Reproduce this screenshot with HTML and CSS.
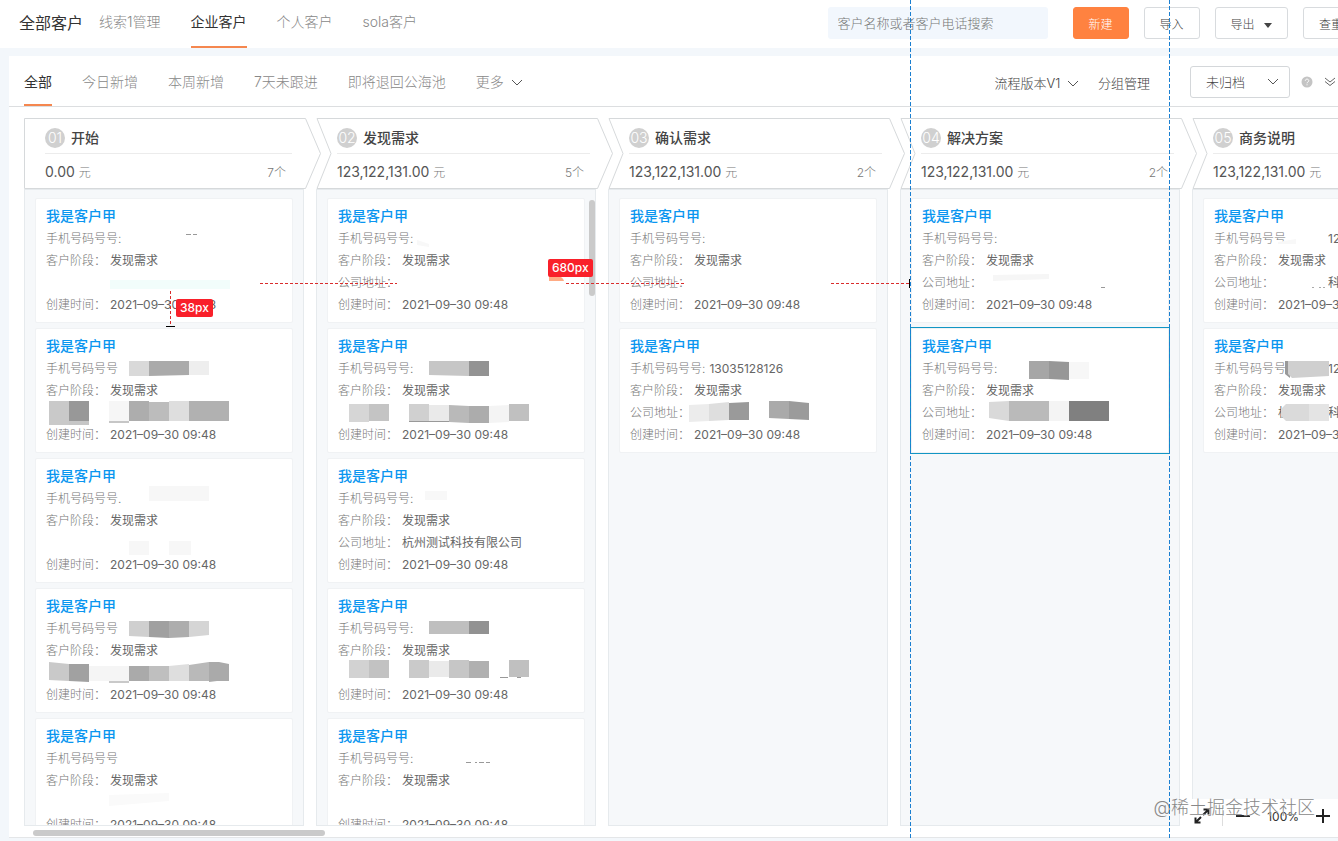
FILE: index.html
```html
<!DOCTYPE html>
<html lang="zh-CN">
<head>
    <meta charset="UTF-8">
    <meta name="viewport" content="width=device-width, initial-scale=1.0">
    <title>全部客户</title>
    <link rel="stylesheet" href="styles.css">
</head>
<body>
    <header class="topbar">
        <h1>全部客户</h1>
        <nav class="tabs">
            <a href="#">线索1管理</a>
            <a href="#" class="active">企业客户</a>
            <a href="#">个人客户</a>
            <a href="#">sola客户</a>
        </nav>
        <div class="actions">
            <input type="text" class="search" placeholder="客户名称或者客户电话搜索" aria-label="搜索">
            <button class="btn primary">新建</button>
            <button class="btn">导入</button>
            <button class="btn">导出 <svg class="caret" viewBox="0 0 8 5"><path d="M0 0h8L4 5z"/></svg></button>
            <button class="btn">查重</button>
        </div>
    </header>

    <main class="panel">
        <div class="toolbar">
            <nav class="tabs">
                <a href="#" class="active">全部</a>
                <a href="#">今日新增</a>
                <a href="#">本周新增</a>
                <a href="#">7天未跟进</a>
                <a href="#">即将退回公海池</a>
                <a href="#">更多 <svg class="chevron" viewBox="0 0 12 8"><path d="M1 1l5 5 5-5"/></svg></a>
            </nav>
            <div class="filters">
                <button class="link">流程版本V1 <svg class="chevron" viewBox="0 0 12 8"><path d="M1 1l5 5 5-5"/></svg></button>
                <button class="link">分组管理</button>
                <div class="select">
                    <select aria-label="归档状态"><option>未归档</option></select>
                    <svg class="chevron" viewBox="0 0 12 8"><path d="M1 1l5 5 5-5"/></svg>
                </div>
                <svg class="help" viewBox="0 0 12 12"><circle cx="6" cy="6" r="5.5"/><path d="M4.3 4.8c0-2.3 3.5-2.2 3.5 0C7.8 6 6 6 6 7.300M6 8.300v1"/></svg>
                <svg class="double" viewBox="0 0 12 10"><path d="M1 1l5 4 5-4M1 4.500l5 4 5-4"/></svg>
            </div>
        </div>

        <div class="board">
            <section class="column">
                <div class="stage">
                    <svg class="arrow" viewBox="0 0 298 72"><path d="M.5.5H281.500l15 35-15 35H.5z"/></svg>
                    <h2><span class="num">01</span>开始</h2>
                    <div class="sum"><span>0.00 <small>元</small></span><span class="count">7个</span></div>
                </div>
                <div class="list">
                    <article class="card">
                        <h3>我是客户甲</h3>
                        <p><label>手机号码号号:</label></p>
                        <p><label>客户阶段：</label>发现需求</p>
                        <p></p>
                        <p><label>创建时间：</label>2021–09–30 09:48</p>
                        <svg class="mosaic" viewBox="0 0 258 125"><path fill="#f2fdfb" d="M75 82h120v9H75z"/><path fill="#999" d="M151 36h5v1h-5zM158 36h4v1h-4z"/></svg>
                    </article>
                    <article class="card">
                        <h3>我是客户甲</h3>
                        <p><label>手机号码号号</label></p>
                        <p><label>客户阶段：</label>发现需求</p>
                        <p></p>
                        <p><label>创建时间：</label>2021–09–30 09:48</p>
                        <svg class="mosaic" viewBox="0 0 258 125">
                            <path fill="#d9d9d9" d="M94 33h20v15H94z"/><path fill="#aaa" d="M114 33h40v14l-40 1z"/><path fill="#eee" d="M154 33h20v14h-20z"/>
                            <path fill="#c9c9c9" d="M14 73h20v24H14z"/><path fill="#989898" d="M34 73h20v22H34z"/><path fill="#c6c6c6" d="M34 93h20v4H34z"/><path fill="#f6f6f6" d="M74 73h20v20H74z"/><path fill="#c6c6c6" d="M74 93h20v2H74z"/>
                            <path fill="#adadad" d="M94 73h20v20H94z"/><path fill="#bcbcbc" d="M114 74h20v19h-20z"/><path fill="#dedede" d="M134 73h20v20h-20z"/><path fill="#b1b1b1" d="M154 73h40v20h-40z"/>
                        </svg>
                    </article>
                    <article class="card">
                        <h3>我是客户甲</h3>
                        <p><label>手机号码号号.</label></p>
                        <p><label>客户阶段：</label>发现需求</p>
                        <p></p>
                        <p><label>创建时间：</label>2021–09–30 09:48</p>
                        <svg class="mosaic" viewBox="0 0 258 125"><path fill="#f7f7f7" d="M114 28h60v15h-60zM94 83h20v14H94zM134 83h22v14h-22z"/></svg>
                    </article>
                    <article class="card">
                        <h3>我是客户甲</h3>
                        <p><label>手机号码号号</label></p>
                        <p><label>客户阶段：</label>发现需求</p>
                        <p></p>
                        <p><label>创建时间：</label>2021–09–30 09:48</p>
                        <svg class="mosaic" viewBox="0 0 258 125">
                            <path fill="#cfcfcf" d="M94 33h20v16l-20-1z"/><path fill="#a0a0a0" d="M114 33h20v17l-20-1z"/><path fill="#adadad" d="M134 33h20v16l-20 1z"/><path fill="#d5d5d5" d="M154 33h20v14l-20 2z"/>
                            <path fill="#c9c9c9" d="M14 74l20 2v17l-20-1z"/><path fill="#a1a1a1" d="M34 76h20v18l-20-1z"/><path fill="#f5f5f5" d="M54 78h40v15H54z"/><path fill="#c9c9c9" d="M74 93h20v2H74z"/>
                            <path fill="#aaa" d="M94 78h20v15H94z"/><path fill="#bfbfbf" d="M114 78h20v15h-20z"/><path fill="#dedede" d="M134 78l20-2v17h-20z"/><path fill="#b9b9b9" d="M154 77l20-3v19h-20z"/><path fill="#aaa" d="M174 74h10l10 2v17h-12l-8 1z"/>
                        </svg>
                    </article>
                    <article class="card">
                        <h3>我是客户甲</h3>
                        <p><label>手机号码号号</label></p>
                        <p><label>客户阶段：</label>发现需求</p>
                        <p></p>
                        <p><label>创建时间：</label>2021–09–30 09:48</p>
                        <svg class="mosaic" viewBox="0 0 258 125"><path fill="#fafafa" d="M74 77l60-2v8l-60 5z"/></svg>
                    </article>
                </div>
            </section>

            <section class="column">
                <div class="stage">
                    <svg class="arrow" viewBox="0 0 298 72"><path d="M1 .5H281.500l15 35-15 35H1l14-35z"/></svg>
                    <h2><span class="num">02</span>发现需求</h2>
                    <div class="sum"><span>123,122,131.00 <small>元</small></span><span class="count">5个</span></div>
                </div>
                <div class="list">
                    <span class="thumb-y"></span>
                    <article class="card">
                        <h3>我是客户甲</h3>
                        <p><label>手机号码号号:</label></p>
                        <p><label>客户阶段：</label>发现需求</p>
                        <p><label>公司地址：</label></p>
                        <p><label>创建时间：</label>2021–09–30 09:48</p>
                        <svg class="mosaic" viewBox="0 0 258 125"><path fill="#f8f8f8" d="M90 42l12 4v3l-12-2z"/></svg>
                    </article>
                    <article class="card">
                        <h3>我是客户甲</h3>
                        <p><label>手机号码号号:</label></p>
                        <p><label>客户阶段：</label>发现需求</p>
                        <p></p>
                        <p><label>创建时间：</label>2021–09–30 09:48</p>
                        <svg class="mosaic" viewBox="0 0 258 125">
                            <path fill="#c6c6c6" d="M102 33h40v15l-40-1z"/><path fill="#939393" d="M142 33h20v15h-20z"/>
                            <path fill="#d6d6d6" d="M22 76h20v18H22z"/><path fill="#c4c4c4" d="M42 76h20v17H42z"/>
                            <path fill="#d0d0d0" d="M82 76h20v18H82z"/><path fill="#eaeaea" d="M102 77h20v17h-20z"/><path fill="#b9b9b9" d="M122 77l20 1v17l-20-1z"/><path fill="#acacac" d="M142 78h20v17h-20z"/><path fill="#f4f4f4" d="M162 78l20-1v17l-20 1z"/><path fill="#c0c0c0" d="M182 76h20v17h-20z"/><path fill="#999" d="M82 93h40v1H82z"/>
                        </svg>
                    </article>
                    <article class="card">
                        <h3>我是客户甲</h3>
                        <p><label>手机号码号号:</label></p>
                        <p><label>客户阶段：</label>发现需求</p>
                        <p><label>公司地址：</label>杭州测试科技有限公司</p>
                        <p><label>创建时间：</label>2021–09–30 09:48</p>
                        <svg class="mosaic" viewBox="0 0 258 125"><path fill="#f8f8f8" d="M98 33h22v9H98z"/></svg>
                    </article>
                    <article class="card">
                        <h3>我是客户甲</h3>
                        <p><label>手机号码号号:</label></p>
                        <p><label>客户阶段：</label>发现需求</p>
                        <p></p>
                        <p><label>创建时间：</label>2021–09–30 09:48</p>
                        <svg class="mosaic" viewBox="0 0 258 125">
                            <path fill="#bfbfbf" d="M102 33h40v13h-40z"/><path fill="#929292" d="M142 33h20v13h-20z"/>
                            <path fill="#d2d2d2" d="M22 72h20v18H22z"/><path fill="#c2c2c2" d="M42 72h20v18H42z"/>
                            <path fill="#cacaca" d="M82 72h20v18H82z"/><path fill="#eaeaea" d="M102 73h20v16h-20z"/><path fill="#c6c6c6" d="M122 72h20v18h-20z"/><path fill="#b0b0b0" d="M142 73h20v17h-20z"/><path fill="#c0c0c0" d="M182 72h20v17h-20z"/><path fill="#999" d="M173 89h8v1h-8zM190 89h4v1h-4z"/>
                        </svg>
                    </article>
                    <article class="card">
                        <h3>我是客户甲</h3>
                        <p><label>手机号码号号:</label></p>
                        <p><label>客户阶段：</label>发现需求</p>
                        <p></p>
                        <p><label>创建时间：</label>2021–09–30 09:48</p>
                        <svg class="mosaic" viewBox="0 0 258 125"><path fill="#999" d="M139 44h5v1h-5zM148 44h2v1h-2zM152 44h5v1h-5zM159 44h4v1h-4z"/></svg>
                    </article>
                </div>
            </section>

            <section class="column">
                <div class="stage">
                    <svg class="arrow" viewBox="0 0 298 72"><path d="M1 .5H281.500l15 35-15 35H1l14-35z"/></svg>
                    <h2><span class="num">03</span>确认需求</h2>
                    <div class="sum"><span>123,122,131.00 <small>元</small></span><span class="count">2个</span></div>
                </div>
                <div class="list">
                    <article class="card">
                        <h3>我是客户甲</h3>
                        <p><label>手机号码号号:</label></p>
                        <p><label>客户阶段：</label>发现需求</p>
                        <p><label>公司地址：</label></p>
                        <p><label>创建时间：</label>2021–09–30 09:48</p>
                    </article>
                    <article class="card">
                        <h3>我是客户甲</h3>
                        <p><label>手机号码号号:</label>13035128126</p>
                        <p><label>客户阶段：</label>发现需求</p>
                        <p><label>公司地址：</label></p>
                        <p><label>创建时间：</label>2021–09–30 09:48</p>
                        <svg class="mosaic" viewBox="0 0 258 125">
                            <path fill="#ececec" d="M70 77l20-1v17l-20 1z"/><path fill="#dedede" d="M90 76l20-2v18l-20 1z"/><path fill="#9a9a9a" d="M110 75l20-1v18h-20z"/><path fill="#aaa" d="M150 73h20v18l-20-1z"/><path fill="#9b9b9b" d="M170 73l20 2v17l-20-1z"/>
                        </svg>
                    </article>
                </div>
            </section>

            <section class="column">
                <div class="stage">
                    <svg class="arrow" viewBox="0 0 298 72"><path d="M1 .5H281.500l15 35-15 35H1l14-35z"/></svg>
                    <h2><span class="num">04</span>解决方案</h2>
                    <div class="sum"><span>123,122,131.00 <small>元</small></span><span class="count">2个</span></div>
                </div>
                <div class="list">
                    <article class="card">
                        <h3>我是客户甲</h3>
                        <p><label>手机号码号号:</label></p>
                        <p><label>客户阶段：</label>发现需求</p>
                        <p><label>公司地址：</label></p>
                        <p><label>创建时间：</label>2021–09–30 09:48</p>
                        <svg class="mosaic" viewBox="0 0 258 125"><path fill="#f6f6f6" d="M82 77l56-1v5l-56 2z"/><path fill="#999" d="M190 89h4v1h-4z"/></svg>
                    </article>
                    <article class="card selected">
                        <h3>我是客户甲</h3>
                        <p><label>手机号码号号:</label></p>
                        <p><label>客户阶段：</label>发现需求</p>
                        <p><label>公司地址：</label></p>
                        <p><label>创建时间：</label>2021–09–30 09:48</p>
                        <svg class="mosaic" viewBox="0 0 258 125">
                            <path fill="#a6a6a6" d="M118 33h20v18h-20z"/><path fill="#979797" d="M138 33l20 1v18l-20-1z"/><path fill="#f7f7f7" d="M158 34h20v17h-20z"/>
                            <path fill="#d9d9d9" d="M78 74l20-1v20l-20-3z"/><path fill="#bababa" d="M98 73h40v20H98z"/><path fill="#f4f4f4" d="M138 73h20v20h-20z"/><path fill="#808080" d="M158 73h40v20h-40z"/>
                        </svg>
                    </article>
                </div>
            </section>

            <section class="column">
                <div class="stage">
                    <svg class="arrow" viewBox="0 0 298 72"><path d="M1 .5H281.500l15 35-15 35H1l14-35z"/></svg>
                    <h2><span class="num">05</span>商务说明</h2>
                    <div class="sum"><span>123,122,131.00 <small>元</small></span></div>
                </div>
                <div class="list">
                    <article class="card">
                        <h3>我是客户甲</h3>
                        <p><label>手机号码号号</label><span class="gap"></span>12</p>
                        <p><label>客户阶段：</label>发现需求</p>
                        <p><label>公司地址：</label><span class="gap wide"></span>科</p>
                        <p><label>创建时间：</label>2021–09–30 09:48</p>
                        <svg class="mosaic" viewBox="0 0 258 125"><path fill="#f8f8f8" d="M75 44l18-3v5H75z"/><path fill="#aaa" d="M109 89h2v1h-2zM116 89h2v1h-2zM120 89h2v1h-2z"/></svg>
                    </article>
                    <article class="card">
                        <h3>我是客户甲</h3>
                        <p><label>手机号码号号</label><span class="gap"></span>12</p>
                        <p><label>客户阶段：</label>发现需求</p>
                        <p><label>公司地址：</label>杭<span class="gap"></span>科</p>
                        <p><label>创建时间：</label>2021–09–30 09:48</p>
                        <svg class="mosaic" viewBox="0 0 258 125">
                            <path fill="#999" d="M82 33h5v17l-5-4z"/><path fill="#cfcfcf" d="M85 33h41v15l-37 2-4-4z"/><path fill="#dadada" d="M78 81l5-5h23v17H83l-5-5z"/><path fill="#e4e4e4" d="M106 76h20v17h-20z"/>
                        </svg>
                    </article>
                </div>
            </section>
        </div>
        <div class="track-x"><span class="thumb-x"></span></div>
    </main>

    <div class="zoom">
        <button aria-label="全屏"><svg width="16" height="16" viewBox="0 0 16 16"><path d="M9 7l5-5M9.500 1.500h5v5M7 9l-5 5M1.500 9.500v5h5"/></svg></button>
        <i class="line"></i>
        <button aria-label="缩小"><svg width="14" height="14" viewBox="0 0 14 14"><path d="M0 7h14"/></svg></button>
        <span>100%</span>
        <button aria-label="放大"><svg width="14" height="14" viewBox="0 0 14 14"><path d="M0 7h14M7 0v14"/></svg></button>
    </div>
    <div class="watermark">@稀土掘金技术社区</div>

    <!-- measuring guides -->
    <svg class="guides" width="1338" height="841">
        <path class="blue" d="M910.500 0v838M1169.500 0v838"/>
        <path class="red" d="M260 283.500h137M566 283.500h119M831 283.500h78M170.500 291v35"/>
        <path class="tick" d="M909.500 279v9M166 326.500h9"/>
        <path fill="#ffab84" d="M549 276h9q5 1 6 5h-15z"/>
    </svg>
    <span class="size size-v">38px</span>
    <span class="size size-h">680px</span>
</body>
</html>
```
FILE: styles.css
```css
* {
    box-sizing: border-box;
}

body {
    margin: 0;
    height: 100vh;
    display: flex;
    flex-direction: column;
    position: relative;
    overflow: hidden;
    background: #f3f7fb;
    color: #555;
    font-family: Inter, "Noto Sans CJK SC", sans-serif;
    font-size: 12px;
    font-weight: 300;
}

h1, h2, h3, p {
    margin: 0;
}

a {
    color: inherit;
    text-decoration: none;
}

button, input, select {
    font: inherit;
    color: inherit;
}

button {
    border: none;
    background: none;
    padding: 0;
    white-space: nowrap;
    cursor: pointer;
}

svg {
    fill: none;
}

/* top bar */
.topbar {
    flex: none;
    height: 48px;
    padding-left: 19px;
    display: flex;
    background: #fff;
    box-shadow: 0 1px 4px #f3f7fb;
}

.topbar h1 {
    margin-right: 16px;
    font-size: 16px;
    font-weight: 400;
    line-height: 46px;
    color: #333;
    white-space: nowrap;
}

.tabs {
    display: flex;
    gap: 30px;
    font-size: 14px;
    color: #888;
    white-space: nowrap;
}

.tabs a {
    line-height: 44px;
    border-bottom: 2px solid transparent;
}

.tabs .active {
    color: #333;
    font-weight: 400;
    border-color: #f5874f;
}

.actions {
    margin-left: auto;
    margin-right: -21px;
    padding-top: 7px;
    display: flex;
    gap: 15px;
}

.search {
    width: 220px;
    height: 32px;
    margin-right: 10px;
    padding: 0 10px;
    border: none;
    border-radius: 3px;
    background: #f2f7fd;
    font-size: 13px;
}

.search::placeholder {
    color: #777;
}

.btn {
    height: 32px;
    padding: 0 15px;
    border: 1px solid #d8dbde;
    border-radius: 3px;
    background: #fff;
    color: #444;
}

.btn.primary {
    background: #ff8240;
    border-color: #ff8240;
    color: #fff;
}

.caret {
    width: 8px;
    height: 5px;
    margin-left: 6px;
    vertical-align: middle;
    fill: #444;
}

/* panel */
.panel {
    flex: 1;
    min-height: 0;
    margin: 8px 0 3px 9px;
    display: flex;
    flex-direction: column;
    background: #fff;
}

.toolbar {
    flex: none;
    height: 51px;
    padding: 0 2px 0 15px;
    display: flex;
    justify-content: space-between;
    border-bottom: 1px solid #dcdee0;
}

.toolbar .tabs a {
    height: 50px;
    line-height: 52px;
}

.chevron {
    width: 12px;
    height: 8px;
    margin-left: 3px;
    stroke: #555;
}

.filters {
    padding-top: 2px;
    display: flex;
    align-items: center;
    font-size: 13px;
    color: #444;
}

.filters .link {
    margin-right: 19px;
}

.select {
    position: relative;
    margin: 0 11px 0 21px;
}

.select select {
    appearance: none;
    width: 100px;
    height: 32px;
    padding: 0 15px;
    border: 1px solid #d4d7da;
    border-radius: 3px;
    background: #fff;
}

.select .chevron {
    position: absolute;
    right: 11px;
    top: 12px;
    pointer-events: none;
}

.help {
    width: 12px;
    height: 12px;
    margin-right: 11px;
}

.help circle {
    fill: #c4c4c4;
}

.help path {
    stroke: #fff;
}

.double {
    width: 12px;
    height: 10px;
    stroke: #666;
}

/* board */
.board {
    flex: 1;
    min-height: 0;
    padding: 11px 0 0 15px;
    display: flex;
    gap: 12px;
    overflow: hidden;
}

.column {
    flex: 0 0 280px;
    display: flex;
    flex-direction: column;
}

.stage {
    flex: none;
    position: relative;
    padding: 5px 12px 0 21px;
    color: #444;
}

.column + .column .stage {
    padding-right: 6px;
}

.arrow {
    position: absolute;
    left: 0;
    top: 0;
    z-index: 1;
    width: 298px;
    height: 72px;
    fill: #fff;
    stroke: #d6d9db;
}

.stage h2, .sum {
    position: relative;
    z-index: 2;
    display: flex;
    align-items: center;
}

.stage h2 {
    height: 31px;
    border-bottom: 1px solid #ececec;
    font-size: 14px;
    font-weight: 500;
    line-height: 20px;
}

.num {
    width: 20px;
    margin-right: 6px;
    border-radius: 50%;
    background: #d0d0d0;
    color: #fff;
    font-weight: 300;
    text-align: center;
}

.sum {
    height: 35px;
    padding-right: 6px;
    justify-content: space-between;
    font-size: 14px;
    font-weight: 400;
    color: #555;
}

.sum small, .count {
    font-size: 12px;
    font-weight: 300;
    color: #777;
}

.list {
    flex: 1;
    min-height: 0;
    position: relative;
    padding: 8px 10px 0;
    display: flex;
    flex-direction: column;
    gap: 5px;
    overflow: hidden;
    border: 1px solid #e6eaed;
    background: #f6f8fa;
}

.card {
    flex: none;
    position: relative;
    padding: 5px 0 6px 10px;
    border: 1px solid #f0f2f4;
    border-radius: 2px;
    background: #fff;
    overflow: hidden;
    white-space: nowrap;
}

.card.selected {
    border-radius: 0;
    outline: 1px solid #1296c4;
}

.card h3 {
    font-size: 14px;
    font-weight: 500;
    line-height: 24px;
    color: #0a96f0;
}

.card p {
    height: 22px;
    line-height: 22px;
    font-weight: 400;
    color: #666;
}

.card label {
    margin-right: 4px;
    font-weight: 300;
    color: #777;
}

.gap {
    display: inline-block;
    width: 38px;
}

.gap.wide {
    width: 50px;
}

.mosaic {
    position: absolute;
    left: -1px;
    top: -1px;
    width: 258px;
    height: 125px;
}

/* scrollbars */
.thumb-y {
    position: absolute;
    right: 0;
    top: 10px;
    width: 6px;
    height: 96px;
    border-radius: 3px;
    background: #cacaca;
}

.track-x {
    flex: none;
    height: 12px;
    padding: 4px 24px;
    border-bottom: 1px solid #e4e6e8;
}

.thumb-x {
    display: block;
    width: 292px;
    height: 6px;
    border-radius: 3px;
    background: #cacaca;
}

/* zoom control */
.zoom {
    position: absolute;
    right: 0;
    bottom: 8px;
    height: 34px;
    padding: 0 8px 0 12px;
    display: flex;
    align-items: center;
    background: #fff;
    color: #333;
    font-weight: 400;
}

.zoom button {
    display: flex;
}

.zoom svg {
    stroke: #222;
    stroke-width: 2;
}

.zoom .line {
    width: 1px;
    height: 20px;
    margin: 0 13px 0 12px;
    background: #ddd;
}

.zoom span {
    margin: 0 17px;
}

.watermark {
    position: absolute;
    right: 23px;
    bottom: 20px;
    font-size: 18px;
    line-height: 26px;
    color: #888;
    text-shadow: 0 0 1px #fff;
}

/* guides */
.guides {
    position: absolute;
    left: 0;
    top: 0;
    z-index: 5;
    pointer-events: none;
}

.blue {
    stroke: #1b7fd0;
    stroke-dasharray: 4 2;
}

.red {
    stroke: #d92c2c;
    stroke-dasharray: 3 2;
}

.tick {
    stroke: #000;
}

.size {
    position: absolute;
    z-index: 6;
    padding: 0 4px;
    border-radius: 2px;
    background: #f9202a;
    color: #fff;
    font-weight: 500;
    line-height: 18px;
}

.size-v {
    left: 176px;
    top: 299px;
}

.size-h {
    left: 548px;
    top: 259px;
}
```
